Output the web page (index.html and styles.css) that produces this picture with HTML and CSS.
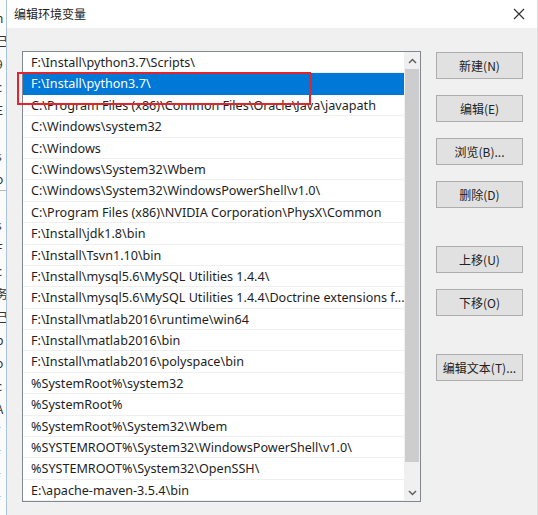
FILE: index.html
```html
<!DOCTYPE html>
<html lang="zh-CN">
<head>
<meta charset="utf-8">
<title>编辑环境变量</title>
<link rel="stylesheet" href="styles.css">
</head>
<body>
<div class="screen">
  <div class="behind">
    <span>n</span><span>已</span><span>9</span><span>c</span><span>E</span><span>I</span><span>s</span><span>o</span>
    <span class="rule"></span>
    <span>s</span><span>F</span><span>c</span><span>务</span><span>已</span><span>b</span><span>o</span><span>c</span><span>A</span><span>f</span><span>f</span><span>f</span><span>f</span>
  </div>
  <div class="dialog">
    <div class="titlebar">
      <span class="title">编辑环境变量</span>
      <svg class="close" width="12" height="12" viewBox="0 0 12 12"><path d="M1 1L11 11M11 1L1 11" stroke="#333" stroke-width="1.2" fill="none"/></svg>
    </div>
    <div class="body">
      <div class="listbox">
        <div class="rows">
          <div class="row">F:\Install\python3.7\Scripts\</div>
          <div class="row selected">F:\Install\python3.7\</div>
          <div class="row">C:\Program Files (x86)\Common Files\Oracle\Java\javapath</div>
          <div class="row">C:\Windows\system32</div>
          <div class="row">C:\Windows</div>
          <div class="row">C:\Windows\System32\Wbem</div>
          <div class="row">C:\Windows\System32\WindowsPowerShell\v1.0\</div>
          <div class="row">C:\Program Files (x86)\NVIDIA Corporation\PhysX\Common</div>
          <div class="row">F:\Install\jdk1.8\bin</div>
          <div class="row">F:\Install\Tsvn1.10\bin</div>
          <div class="row">F:\Install\mysql5.6\MySQL Utilities 1.4.4\</div>
          <div class="row">F:\Install\mysql5.6\MySQL Utilities 1.4.4\Doctrine extensions f...</div>
          <div class="row">F:\Install\matlab2016\runtime\win64</div>
          <div class="row">F:\Install\matlab2016\bin</div>
          <div class="row">F:\Install\matlab2016\polyspace\bin</div>
          <div class="row">%SystemRoot%\system32</div>
          <div class="row">%SystemRoot%</div>
          <div class="row">%SystemRoot%\System32\Wbem</div>
          <div class="row">%SYSTEMROOT%\System32\WindowsPowerShell\v1.0\</div>
          <div class="row">%SYSTEMROOT%\System32\OpenSSH\</div>
          <div class="row">E:\apache-maven-3.5.4\bin</div>
        </div>
        <div class="scrollbar">
          <div class="arrow up"><svg width="9" height="6" viewBox="0 0 9 6"><path d="M1 5L4.5 1.5L8 5" stroke="#606060" stroke-width="1.5" fill="none"/></svg></div>
          <div class="thumb"></div>
          <div class="track"></div>
          <div class="arrow down"><svg width="9" height="6" viewBox="0 0 9 6"><path d="M1 1L4.5 4.5L8 1" stroke="#606060" stroke-width="1.5" fill="none"/></svg></div>
        </div>
      </div>
      <div class="buttons">
        <div class="btn">新建(N)</div>
        <div class="btn">编辑(E)</div>
        <div class="btn">浏览(B)...</div>
        <div class="btn">删除(D)</div>
        <div class="btn spaced">上移(U)</div>
        <div class="btn">下移(O)</div>
        <div class="btn spaced">编辑文本(T)...</div>
      </div>
    </div>
  </div>
  <div class="highlight"></div>
</div>
</body>
</html>
```

FILE: styles.css
```css
* { box-sizing: border-box; }
html, body { margin: 0; padding: 0; }
body {
  width: 538px;
  height: 515px;
  overflow: hidden;
  background: #f0f0f0;
  font-family: "Noto Sans", "Noto Sans CJK SC", sans-serif;
}
.screen {
  position: relative;
  display: flex;
  width: 538px;
  height: 515px;
}
.behind {
  width: 7px;
  flex: none;
  background: #fbfbfb;
  border-right: 1px solid #a9c3dc;
  overflow: hidden;
  display: flex;
  flex-direction: column;
  padding-top: 6px;
  font-family: "Noto Sans CJK SC", sans-serif;
  font-size: 12px;
  line-height: 23px;
  color: #333;
}
.behind span {
  display: block;
  margin-left: -4px;
  height: 23px;
  white-space: nowrap;
}
.behind .rule {
  height: 1px;
  background: #b8b8b8;
  margin: 0 0 22px 0;
}
.dialog {
  flex: 1;
  display: flex;
  flex-direction: column;
  border-right: 1px solid #dcdcdc;
  background: #f0f0f0;
}
.titlebar {
  height: 28px;
  flex: none;
  background: #ffffff;
  display: flex;
  align-items: center;
  justify-content: space-between;
  padding: 0 7px 1px 7px;
}
.title {
  font-family: "Noto Sans CJK SC", sans-serif;
  font-size: 12px;
  color: #222;
}
.close { margin-right: 5px; }
.body {
  display: flex;
  padding: 23px 0 0 15px;
  gap: 15px;
}
.listbox {
  width: 399px;
  height: 451px;
  border: 1px solid #828790;
  background: #fff;
  display: flex;
  overflow: hidden;
}
.rows {
  flex: 1;
  min-width: 0;
  display: flex;
  flex-direction: column;
}
.row {
  height: 21.4px;
  flex: none;
  line-height: 21px;
  padding-left: 8px;
  font-size: 12.6px;
  color: #1e1e1e;
  white-space: nowrap;
  overflow: hidden;
  border-bottom: 1px solid #efefef;
}
.row.selected {
  background: #0078d7;
  color: #fff;
  border-bottom-color: #0078d7;
}
.scrollbar {
  width: 16px;
  flex: none;
  background: #f0f0f0;
  display: flex;
  flex-direction: column;
}
.arrow {
  height: 17px;
  display: flex;
  align-items: center;
  justify-content: center;
  flex: none;
}
.thumb {
  height: 393px;
  flex: none;
  background: #cdcdcd;
  margin: 0 1px;
}
.track { flex: 1; }
.buttons {
  display: flex;
  flex-direction: column;
  gap: 16px;
  width: 87px;
  padding-top: 1px;
}
.btn {
  height: 27px;
  background: #e1e1e1;
  border: 1px solid #adadad;
  display: flex;
  align-items: center;
  justify-content: center;
  font-family: "Noto Sans CJK SC", sans-serif;
  font-size: 12px;
  color: #222;
}
.btn.spaced { margin-top: 22px; }
.highlight {
  position: absolute;
  left: 17px;
  top: 72px;
  width: 294px;
  height: 33px;
  border: 2px solid #e3242b;
}
```
